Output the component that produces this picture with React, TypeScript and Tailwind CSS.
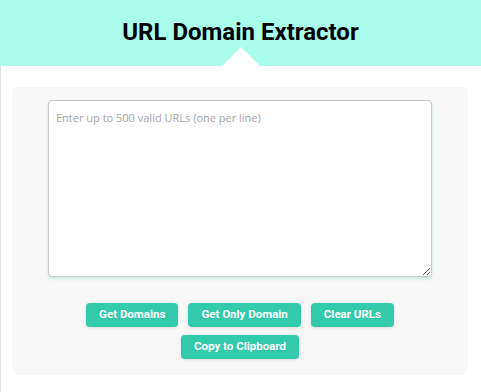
export default function App() {
	return (
		<div className="min-h-[392px] bg-white font-['Roboto',sans-serif]">
			<header className="relative h-[66px] bg-[#a8fdeb] flex items-center justify-center">
				<h1 className="text-[24px] font-bold text-black leading-none -mt-[3px]">URL Domain Extractor</h1>
				<div className="absolute bottom-0 left-[222px] w-0 h-0 border-l-[19px] border-r-[19px] border-b-[19px] border-l-transparent border-r-transparent border-b-white" />
			</header>
			<main className="border-l border-[#e2e2e2] pt-[21px] pb-[19px] pl-[11px] pr-[13px]">
				<div className="rounded-[6px] bg-[#f7f7f7] pt-[13px] pb-[16px] flex flex-col items-center">
					<textarea
						className="w-[384px] h-[177px] rounded-[4px] border border-[#c8c8c8] bg-white px-[7px] py-[9px] text-[11px] font-['Open_Sans',sans-serif] text-gray-700 placeholder:text-[#a5a5a5] shadow-[0_2px_3px_rgba(51,201,171,0.25)] outline-none"
						placeholder="Enter up to 500 valid URLs (one per line)"
					/>
					<div className="mt-[26px] flex flex-wrap justify-center gap-x-[10px] gap-y-[8px] w-[330px]">
						{["Get Domains", "Get Only Domain", "Clear URLs", "Copy to Clipboard"].map((label) => (
							<button
								key={label}
								className="h-[24px] px-[13px] rounded-[4px] bg-[#33c9ab] text-white text-[11.5px] font-bold shadow-[0_1px_3px_rgba(0,0,0,0.12)]"
							>
								{label}
							</button>
						))}
					</div>
				</div>
			</main>
		</div>
	);
}
